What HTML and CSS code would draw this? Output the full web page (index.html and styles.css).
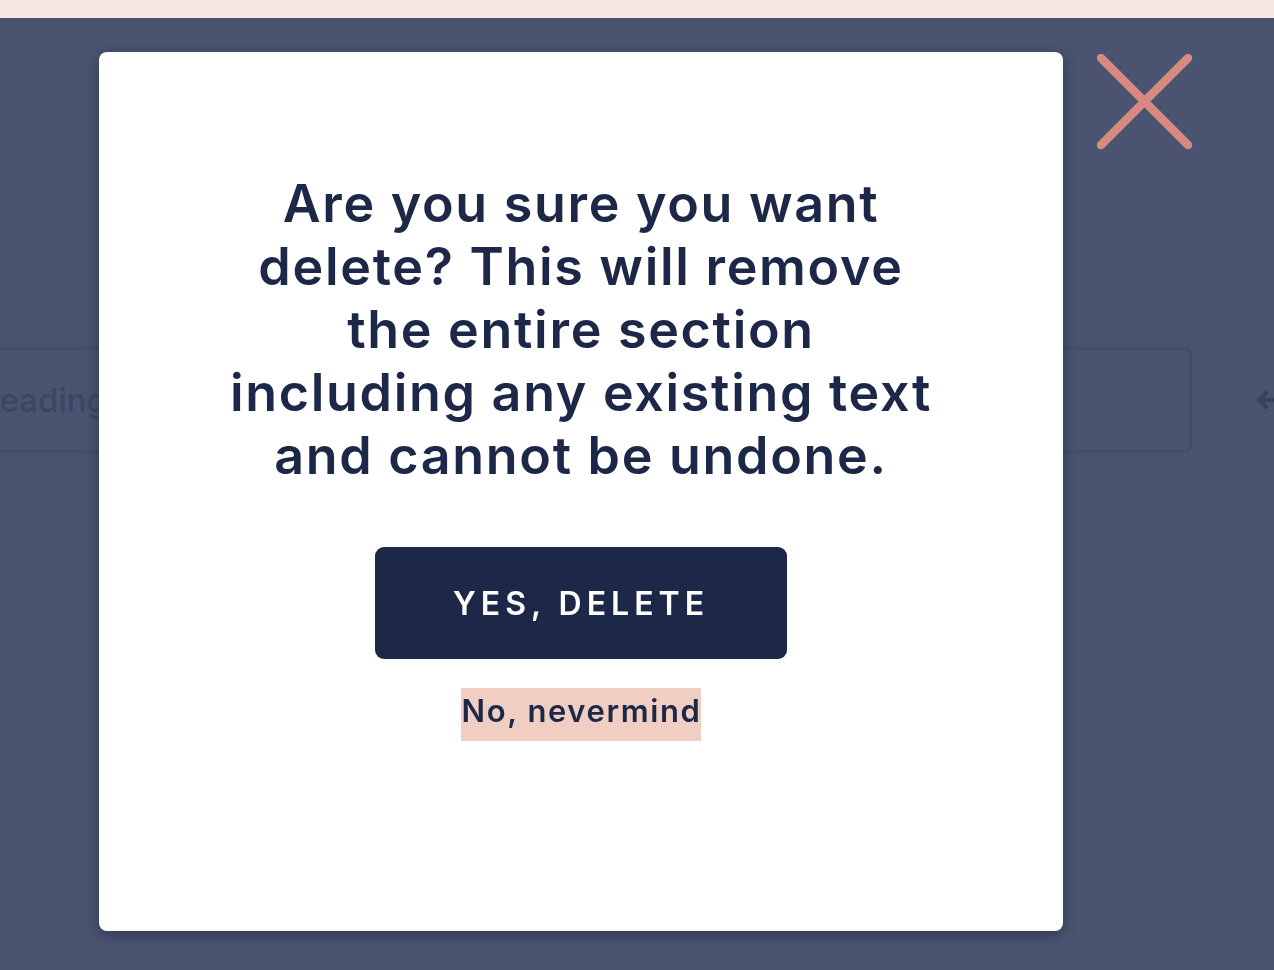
FILE: index.html
```html
<!DOCTYPE html>
<html lang="en">
<head>
  <meta charset="UTF-8" />
  <title>Delete section</title>
  <link rel="stylesheet" href="styles.css">
</head>
<body>

  <div class="top-bar"></div>

  <!-- page content behind the overlay -->
  <div class="page">
    <div class="field-row">
      <div class="field">Heading</div>
      <svg class="move-icon" width="34" height="34" viewBox="0 0 34 34">
        <path d="M30 17H5M12 10l-7 7 7 7" fill="none" stroke="currentColor" stroke-width="4.5" stroke-linecap="round" stroke-linejoin="round"/>
      </svg>
    </div>
  </div>

  <div class="overlay">
    <div class="modal">
      <h2>Are you sure you want<br> delete? This will remove<br> the entire section<br> including any existing text<br> and cannot be undone.</h2>
      <button class="btn-delete">YES, DELETE</button>
      <button class="btn-cancel">No, nevermind</button>
    </div>

    <button class="close-btn" aria-label="Close">
      <svg width="100" height="100" viewBox="0 0 100 100">
        <path d="M4 4L91 91M91 4L4 91" stroke="currentColor" stroke-width="8.5" stroke-linecap="round"/>
      </svg>
    </button>
  </div>

</body>
</html>
```

FILE: styles.css
```css
body {
  margin: 0;
  font-family: Inter, 'Noto Sans', sans-serif;
  background: #4a5470;
  height: 970px;
  overflow: hidden;
}

.top-bar {
  height: 18px;
  background: #f5e8e4;
}

.page {
  padding-top: 329px;
}

.field-row {
  display: flex;
  align-items: center;
  gap: 62px;
  margin-left: -80px;
}

.field {
  width: 1272px;
  height: 106px;
  flex-shrink: 0;
  box-sizing: border-box;
  border: 3px solid #434d69;
  border-radius: 8px;
  padding: 0 0 0 52px;
  display: flex;
  align-items: center;
  font-size: 33px;
  font-weight: 500;
  color: #3c4663;
}

.move-icon {
  color: #38425f;
  flex-shrink: 0;
}

.overlay {
  position: fixed;
  top: 18px;
  left: 0;
  right: 0;
  bottom: 0;
}

.modal {
  position: absolute;
  left: 99px;
  top: 34px;
  width: 964px;
  height: 879px;
  box-sizing: border-box;
  background: #fff;
  border-radius: 8px;
  box-shadow: 0 4px 14px rgba(20, 22, 40, 0.45);
  display: flex;
  flex-direction: column;
  align-items: center;
  padding-top: 120px;
}

h2 {
  margin: 0 0 60px;
  width: 800px;
  text-align: center;
  font-size: 52px;
  line-height: 63px;
  font-weight: 600;
  letter-spacing: 1.7px;
  color: #1d2848;
}

.btn-delete {
  width: 412px;
  height: 112px;
  border: none;
  border-radius: 9px;
  background: #1d2848;
  color: #fff;
  font-family: inherit;
  font-size: 32px;
  font-weight: 600;
  letter-spacing: 5px;
  cursor: pointer;
}

.btn-cancel {
  margin-top: 29px;
  height: 53px;
  padding: 0 0 8px 1px;
  border: none;
  background: #f0cec1;
  color: #1d2848;
  font-family: inherit;
  font-size: 31px;
  font-weight: 600;
  letter-spacing: 1.6px;
  cursor: pointer;
}

.close-btn {
  position: absolute;
  left: 1097px;
  top: 36px;
  padding: 0;
  border: none;
  background: none;
  color: #d88a82;
  cursor: pointer;
}

.close-btn svg {
  display: block;
}
```
